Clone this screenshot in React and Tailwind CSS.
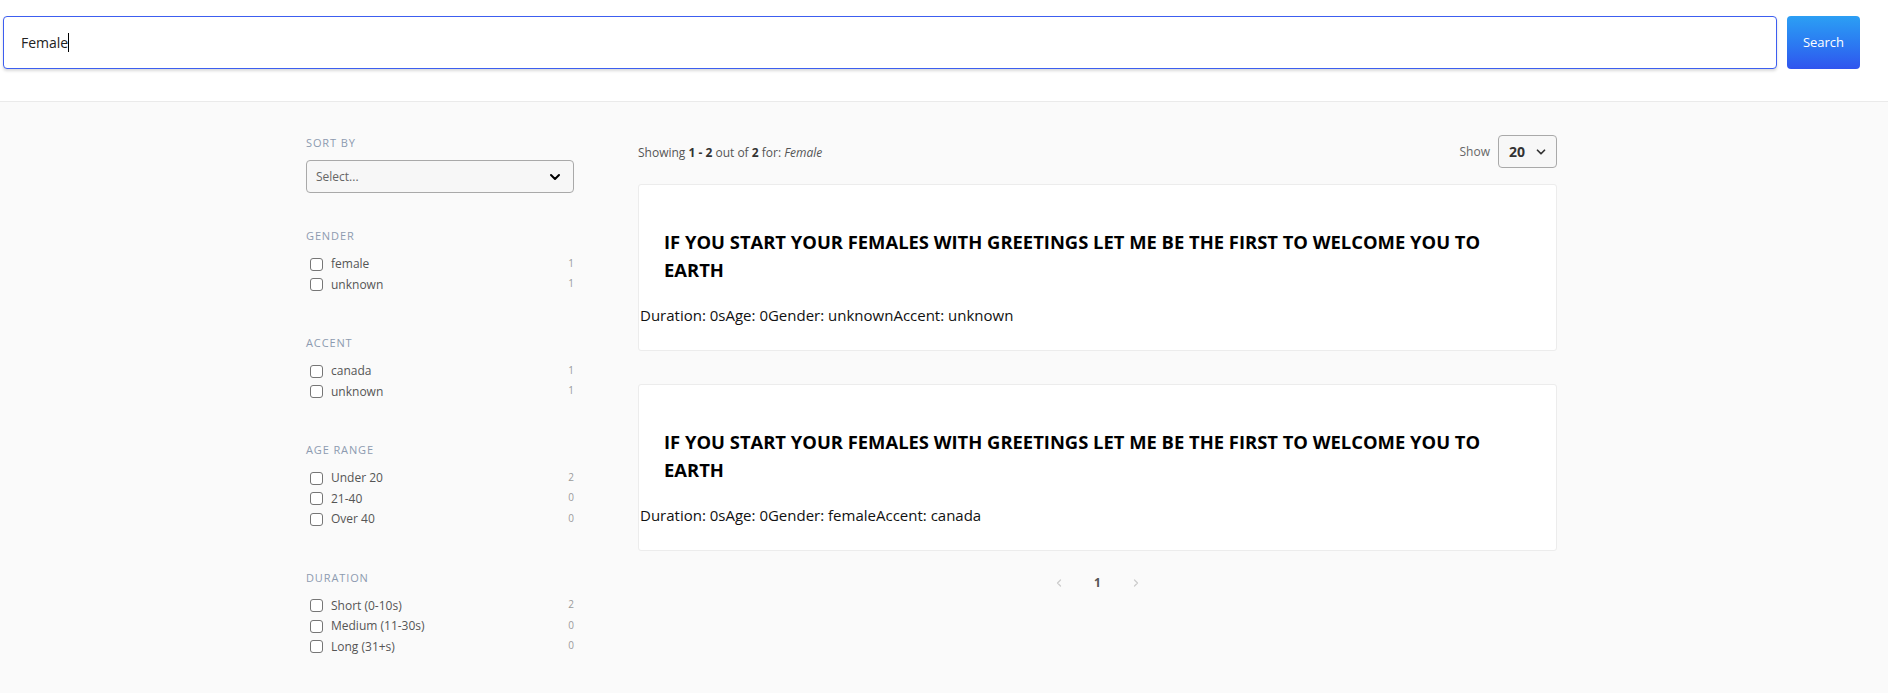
import React from "react";
import { ChevronDown, ChevronLeft, ChevronRight } from "lucide-react";

const facets = [
  {
    title: "Gender",
    items: [
      { label: "female", count: 1 },
      { label: "unknown", count: 1 },
    ],
  },
  {
    title: "Accent",
    items: [
      { label: "canada", count: 1 },
      { label: "unknown", count: 1 },
    ],
  },
  {
    title: "Age Range",
    items: [
      { label: "Under 20", count: 2 },
      { label: "21-40", count: 0 },
      { label: "Over 40", count: 0 },
    ],
  },
  {
    title: "Duration",
    items: [
      { label: "Short (0-10s)", count: 2 },
      { label: "Medium (11-30s)", count: 0 },
      { label: "Long (31+s)", count: 0 },
    ],
  },
];

const results = [
  {
    title:
      "IF YOU START YOUR FEMALES WITH GREETINGS LET ME BE THE FIRST TO WELCOME YOU TO EARTH",
    duration: "0s",
    age: "0",
    gender: "unknown",
    accent: "unknown",
  },
  {
    title:
      "IF YOU START YOUR FEMALES WITH GREETINGS LET ME BE THE FIRST TO WELCOME YOU TO EARTH",
    duration: "0s",
    age: "0",
    gender: "female",
    accent: "canada",
  },
];

const FacetGroup = ({ title, items }) => (
  <div className="mt-[40px] first:mt-0">
    <p className="h-4 text-[11px] leading-4 uppercase tracking-[0.08em] text-[#8d9bb0]">
      {title}
    </p>
    <div className="mt-[10px]">
      {items.map((item) => (
        <label
          key={item.label}
          className="flex items-center h-[20.5px] pl-[4px] text-[12px] text-[#555]"
        >
          <span className="w-[13px] h-[13px] border border-[#767676] rounded-[3px] bg-white shrink-0" />
          <span className="ml-[8px] flex-1">{item.label}</span>
          <span className="text-[10px] text-[#9a9a9a] -mt-[2px]">
            {item.count}
          </span>
        </label>
      ))}
    </div>
  </div>
);

const ResultCard = ({ item }) => (
  <div className="bg-white border border-[#ececec] rounded-[3px] pt-[43px] pb-[23px]">
    <h2 className="px-[25px] text-[18.4px] leading-[28px] font-bold text-black">
      {item.title}
    </h2>
    <div className="mt-[19px] pl-[1px] text-[15px] leading-6 text-[#111]">
      <span>Duration: {item.duration}</span>
      <span>Age: {item.age}</span>
      <span>Gender: {item.gender}</span>
      <span>Accent: {item.accent}</span>
    </div>
  </div>
);

export default function App() {
  return (
    <div className="min-h-[693px] bg-[#fafafa] font-['Open_Sans',sans-serif]">
      <div className="h-[102px] bg-white border-b border-[#eaeaea] flex items-start pt-[16px] pl-[3px]">
        <div className="w-[1774px] h-[53px] border border-[#3d5ef0] rounded-[4px] bg-white shadow-[0_2px_3px_rgba(0,0,0,0.15)] flex items-center pl-[17px]">
          <span className="text-[14px] text-[#222]">Female</span>
          <span className="w-px h-[19px] bg-black" />
        </div>
        <button className="ml-[10px] w-[73px] h-[53px] rounded-[4px] bg-gradient-to-b from-[#2c9ff4] to-[#3054ee] text-white text-[13px]">
          Search
        </button>
      </div>

      <div className="flex pl-[306px] pt-[33px] pb-[38px]">
        <aside className="w-[268px] shrink-0">
          <p className="h-4 text-[11px] leading-4 uppercase tracking-[0.08em] text-[#8d9bb0]">
            Sort by
          </p>
          <div className="mt-[9px] h-[33px] border border-[#a9a9a9] rounded-[4px] bg-[#f7f7f7] flex items-center justify-between pl-[9px] pr-[10px] text-[12px] text-[#666]">
            <span>Select...</span>
            <ChevronDown size={16} strokeWidth={3} className="text-black" />
          </div>
          <div className="mt-[35px]">
            {facets.map((f) => (
              <FacetGroup key={f.title} title={f.title} items={f.items} />
            ))}
          </div>
        </aside>

        <main className="ml-[64px] w-[919px]">
          <div className="flex items-center justify-between h-[33px]">
            <p className="text-[12px] text-[#555] pt-[3px]">
              Showing <b className="text-[#333]">1 - 2</b> out of{" "}
              <b className="text-[#333]">2</b> for: <i>Female</i>
            </p>
            <div className="flex items-center">
              <span className="text-[12px] text-[#666] mr-[8px]">Show</span>
              <div className="w-[59px] h-[33px] border border-[#a9a9a9] rounded-[4px] bg-[#f7f7f7] flex items-center pl-[10px] gap-[9px] text-[14px] font-bold text-[#333]">
                20
                <ChevronDown size={14} strokeWidth={3} className="text-[#333]" />
              </div>
            </div>
          </div>

          <div className="mt-[16px] flex flex-col gap-[33px]">
            {results.map((r, i) => (
              <ResultCard key={i} item={r} />
            ))}
          </div>

          <div className="mt-[23px] flex items-center justify-center gap-[29px] h-[18px]">
            <ChevronLeft size={12} strokeWidth={2.5} className="text-[#ccc]" />
            <span className="text-[12px] font-bold text-[#555]">1</span>
            <ChevronRight size={12} strokeWidth={2.5} className="text-[#ccc]" />
          </div>
        </main>
      </div>
    </div>
  );
}
